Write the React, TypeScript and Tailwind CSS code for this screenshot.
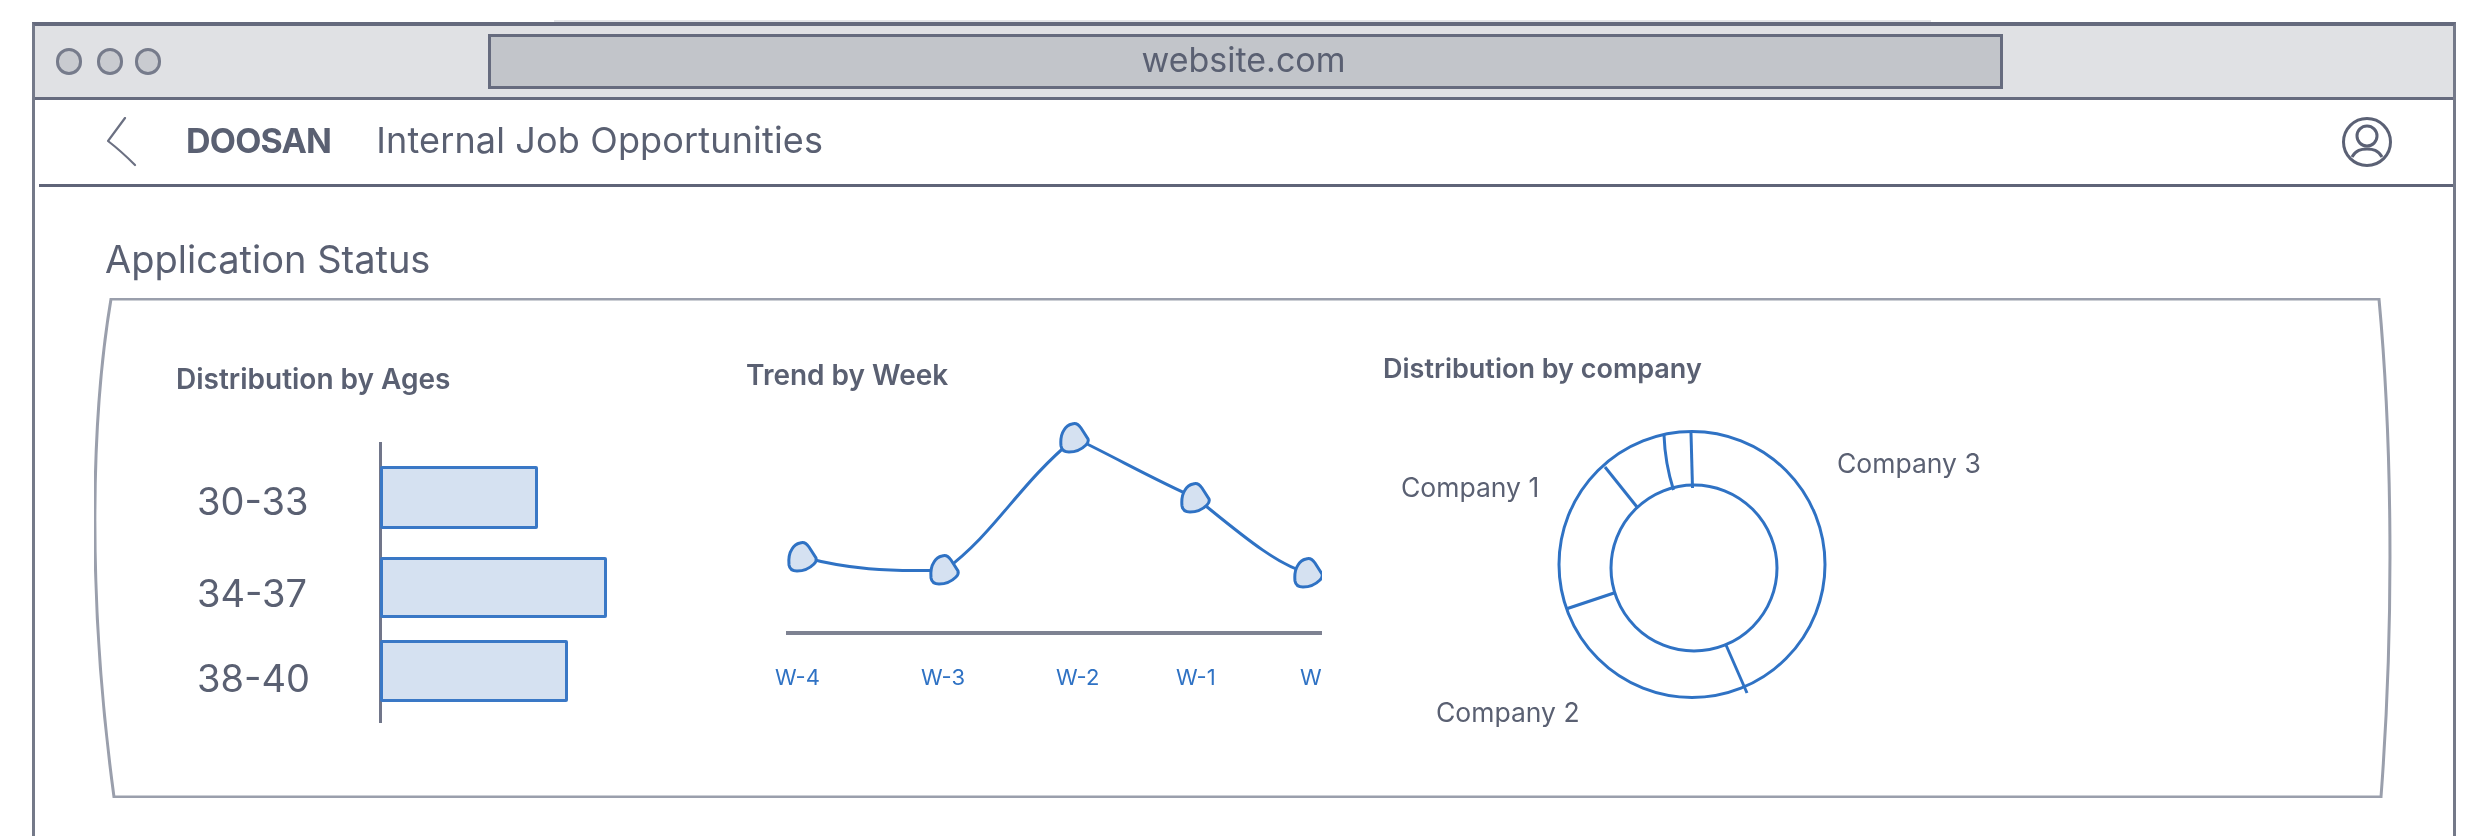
const ages = [
  { label: "30-33", labelTop: "mt-[36px]", barTop: "mt-[24px]", width: "w-[158px]", height: "h-[63px]" },
  { label: "34-37", labelTop: "mt-[46px]", barTop: "mt-[28px]", width: "w-[227px]", height: "h-[61px]" },
  { label: "38-40", labelTop: "mt-[39px]", barTop: "mt-[22px]", width: "w-[188px]", height: "h-[62px]" },
];

const weekPoints = [
  [56, 136],
  [198, 149],
  [328, 17],
  [449, 77],
  [562, 152],
];

const weeks = ["W-4", "W-3", "W-2", "W-1", "W"];

const inkBlue = "#2f72c4";
const blobPath =
  "M-3 -14 Q2 -16 6 -10 L13 1 Q14 4 11 7 Q4 14 -6 14 Q-13 14 -14 8 Q-15 -2 -11 -8 Q-8 -13 -3 -14 Z";

function WindowDot() {
  return <span className="h-[27px] w-[26px] rounded-full border-[3px] border-[#767b8b] bg-[#c9cbd0]" />;
}

function BackIcon() {
  return (
    <svg width="30" height="50" viewBox="0 0 30 50" fill="none" stroke="#6b7082" strokeWidth="2.2" strokeLinecap="round">
      <path d="M18 1 L1 24 Q14 34 28 48" />
    </svg>
  );
}

function UserIcon() {
  return (
    <svg width="52" height="52" viewBox="0 0 52 52" fill="none" stroke="#5b6175" strokeWidth="3">
      <circle cx="26" cy="26" r="23.5" />
      <circle cx="26" cy="20" r="10" />
      <path d="M11 41 C15 34 20 33 26 33 C32 33 37 34 41 41" />
    </svg>
  );
}

function AgeChart() {
  return (
    <div className="mt-[47px] flex h-[281px]">
      <div className="flex w-[203px] flex-col pl-[21px]">
        {ages.map((a) => (
          <span key={a.label} className={`${a.labelTop} text-[38px] leading-[46px] text-[#5a6072]`}>
            {a.label}
          </span>
        ))}
      </div>
      <div className="flex flex-col border-l-[3px] border-[#71768a]">
        {ages.map((a) => (
          <div
            key={a.label}
            className={`${a.barTop} ${a.width} ${a.height} -ml-[2px] rounded-[2px] border-[3px] border-[#3a78c6] bg-[#d5e1f1]`}
          />
        ))}
      </div>
    </div>
  );
}

function WeekChart() {
  return (
    <div className="mt-[30px] w-[576px]">
      <svg width="576" height="220" viewBox="-1 0 576 220" fill="none" className="block">
        <path
          d="M56 136 C100 148 140 151 198 149 C250 110 270 65 328 17 C375 40 410 60 449 77 C490 110 530 145 562 152"
          stroke={inkBlue}
          strokeWidth="3"
        />
        {weekPoints.map(([x, y]) => (
          <path
            key={x}
            d={blobPath}
            transform={`translate(${x} ${y})`}
            fill="#d5e1f1"
            stroke={inkBlue}
            strokeWidth="3"
          />
        ))}
        <line x1="39" y1="212" x2="576" y2="212" stroke="#7e8292" strokeWidth="4" />
      </svg>
      <div className="mt-[22px] grid grid-cols-[146px_135px_120px_124px_21px] overflow-hidden pl-[29px] text-[22px] leading-[28px] text-[#2f72c4]">
        {weeks.map((w) => (
          <span key={w}>{w}</span>
        ))}
      </div>
    </div>
  );
}

function CompanyChart() {
  return (
    <div className="relative mt-[35px] h-[310px] w-[620px] pl-[172px] pt-[8px]">
      <svg width="275" height="274" viewBox="0 0 275 274" fill="none" stroke={inkBlue} strokeWidth="3" className="block">
        <circle cx="137" cy="136.5" r="133" />
        <circle cx="139" cy="140" r="83" />
        <path d="M50 39 L82 79" />
        <path d="M109 7 Q110 35 118.5 62" />
        <path d="M136 5 L137.5 60" />
        <path d="M11 181 L59 165" />
        <path d="M171 217 L192 265" />
      </svg>
      <span className="absolute left-[18px] top-[51px] text-[26.5px] leading-[32px] text-[#5a6072]">Company 1</span>
      <span className="absolute left-[454px] top-[27px] text-[26.5px] leading-[32px] text-[#5a6072]">Company 3</span>
      <span className="absolute left-[53px] top-[276px] text-[26.5px] leading-[32px] text-[#5a6072]">Company 2</span>
    </div>
  );
}

export default function App() {
  return (
    <div className="relative h-[836px] w-[2484px] overflow-hidden bg-white pl-[32px] pr-[28px] pt-[22px] font-['Inter',sans-serif] text-[#5a6072] blur-[0.7px]">
      {/* faint second pencil stroke above the window edge */}
      <div className="absolute left-[554px] top-[20px] h-[2px] w-[1377px] bg-[#e4e5e8]" />

      <div className="h-[814px] border-x-[3px] border-t-[4px] border-x-[#747989] border-t-[#656a7d]">
        <div className="flex h-[74px] items-center border-b-[3px] border-[#666b7e] bg-[#e0e1e4] pl-[21px]">
          <WindowDot />
          <span className="ml-[15px] flex">
            <WindowDot />
          </span>
          <span className="ml-[12px] flex">
            <WindowDot />
          </span>
          <div className="ml-[327px] flex h-[55px] w-[1515px] items-center justify-center border-[3px] border-[#666b7e] bg-[#c2c5ca] pb-[4px] pr-[4px] text-[34px] leading-none text-[#5a6072]">
            website.com
          </div>
        </div>

        <div className="ml-[4px] flex h-[87px] items-center border-b-[3px] border-[#5f6478] pl-[68px] pr-[60px]">
          <BackIcon />
          <span className="mb-[2px] ml-[49px] text-[34px] font-bold leading-none tracking-[-0.8px] text-[#5a6072]">DOOSAN</span>
          <span className="mb-[4px] ml-[45px] text-[36px] leading-none tracking-[0.15px] text-[#5a6072]">Internal Job Opportunities</span>
          <span className="ml-auto flex">
            <UserIcon />
          </span>
        </div>

        <h1 className="ml-[70px] mt-[50px] text-[38px] font-normal leading-[44px] text-[#5a6072]">Application Status</h1>

        <div className="relative ml-[59px] mt-[17px] flex h-[500px] w-[2299px] items-start pl-[82px]">
          <svg
            width="2299"
            height="500"
            viewBox="0 0 2299 500"
            fill="none"
            stroke="#9a9fac"
            strokeWidth="3"
            className="absolute left-0 top-0"
          >
            <path d="M17 1 L2285 1 C2296 120 2302 300 2287 499 L20 499 C-7 300 -3 120 17 1 Z" />
          </svg>

          <section className="relative w-[570px] pt-[65px]">
            <h2 className="text-[28px] font-semibold leading-[32px]">Distribution by Ages</h2>
            <AgeChart />
          </section>
          <section className="relative w-[637px] pt-[61px]">
            <h2 className="text-[28px] font-semibold leading-[32px]">Trend by Week</h2>
            <WeekChart />
          </section>
          <section className="relative pt-[55px]">
            <h2 className="text-[27px] font-semibold leading-[32px]">Distribution by company</h2>
            <CompanyChart />
          </section>
        </div>
      </div>
    </div>
  );
}
